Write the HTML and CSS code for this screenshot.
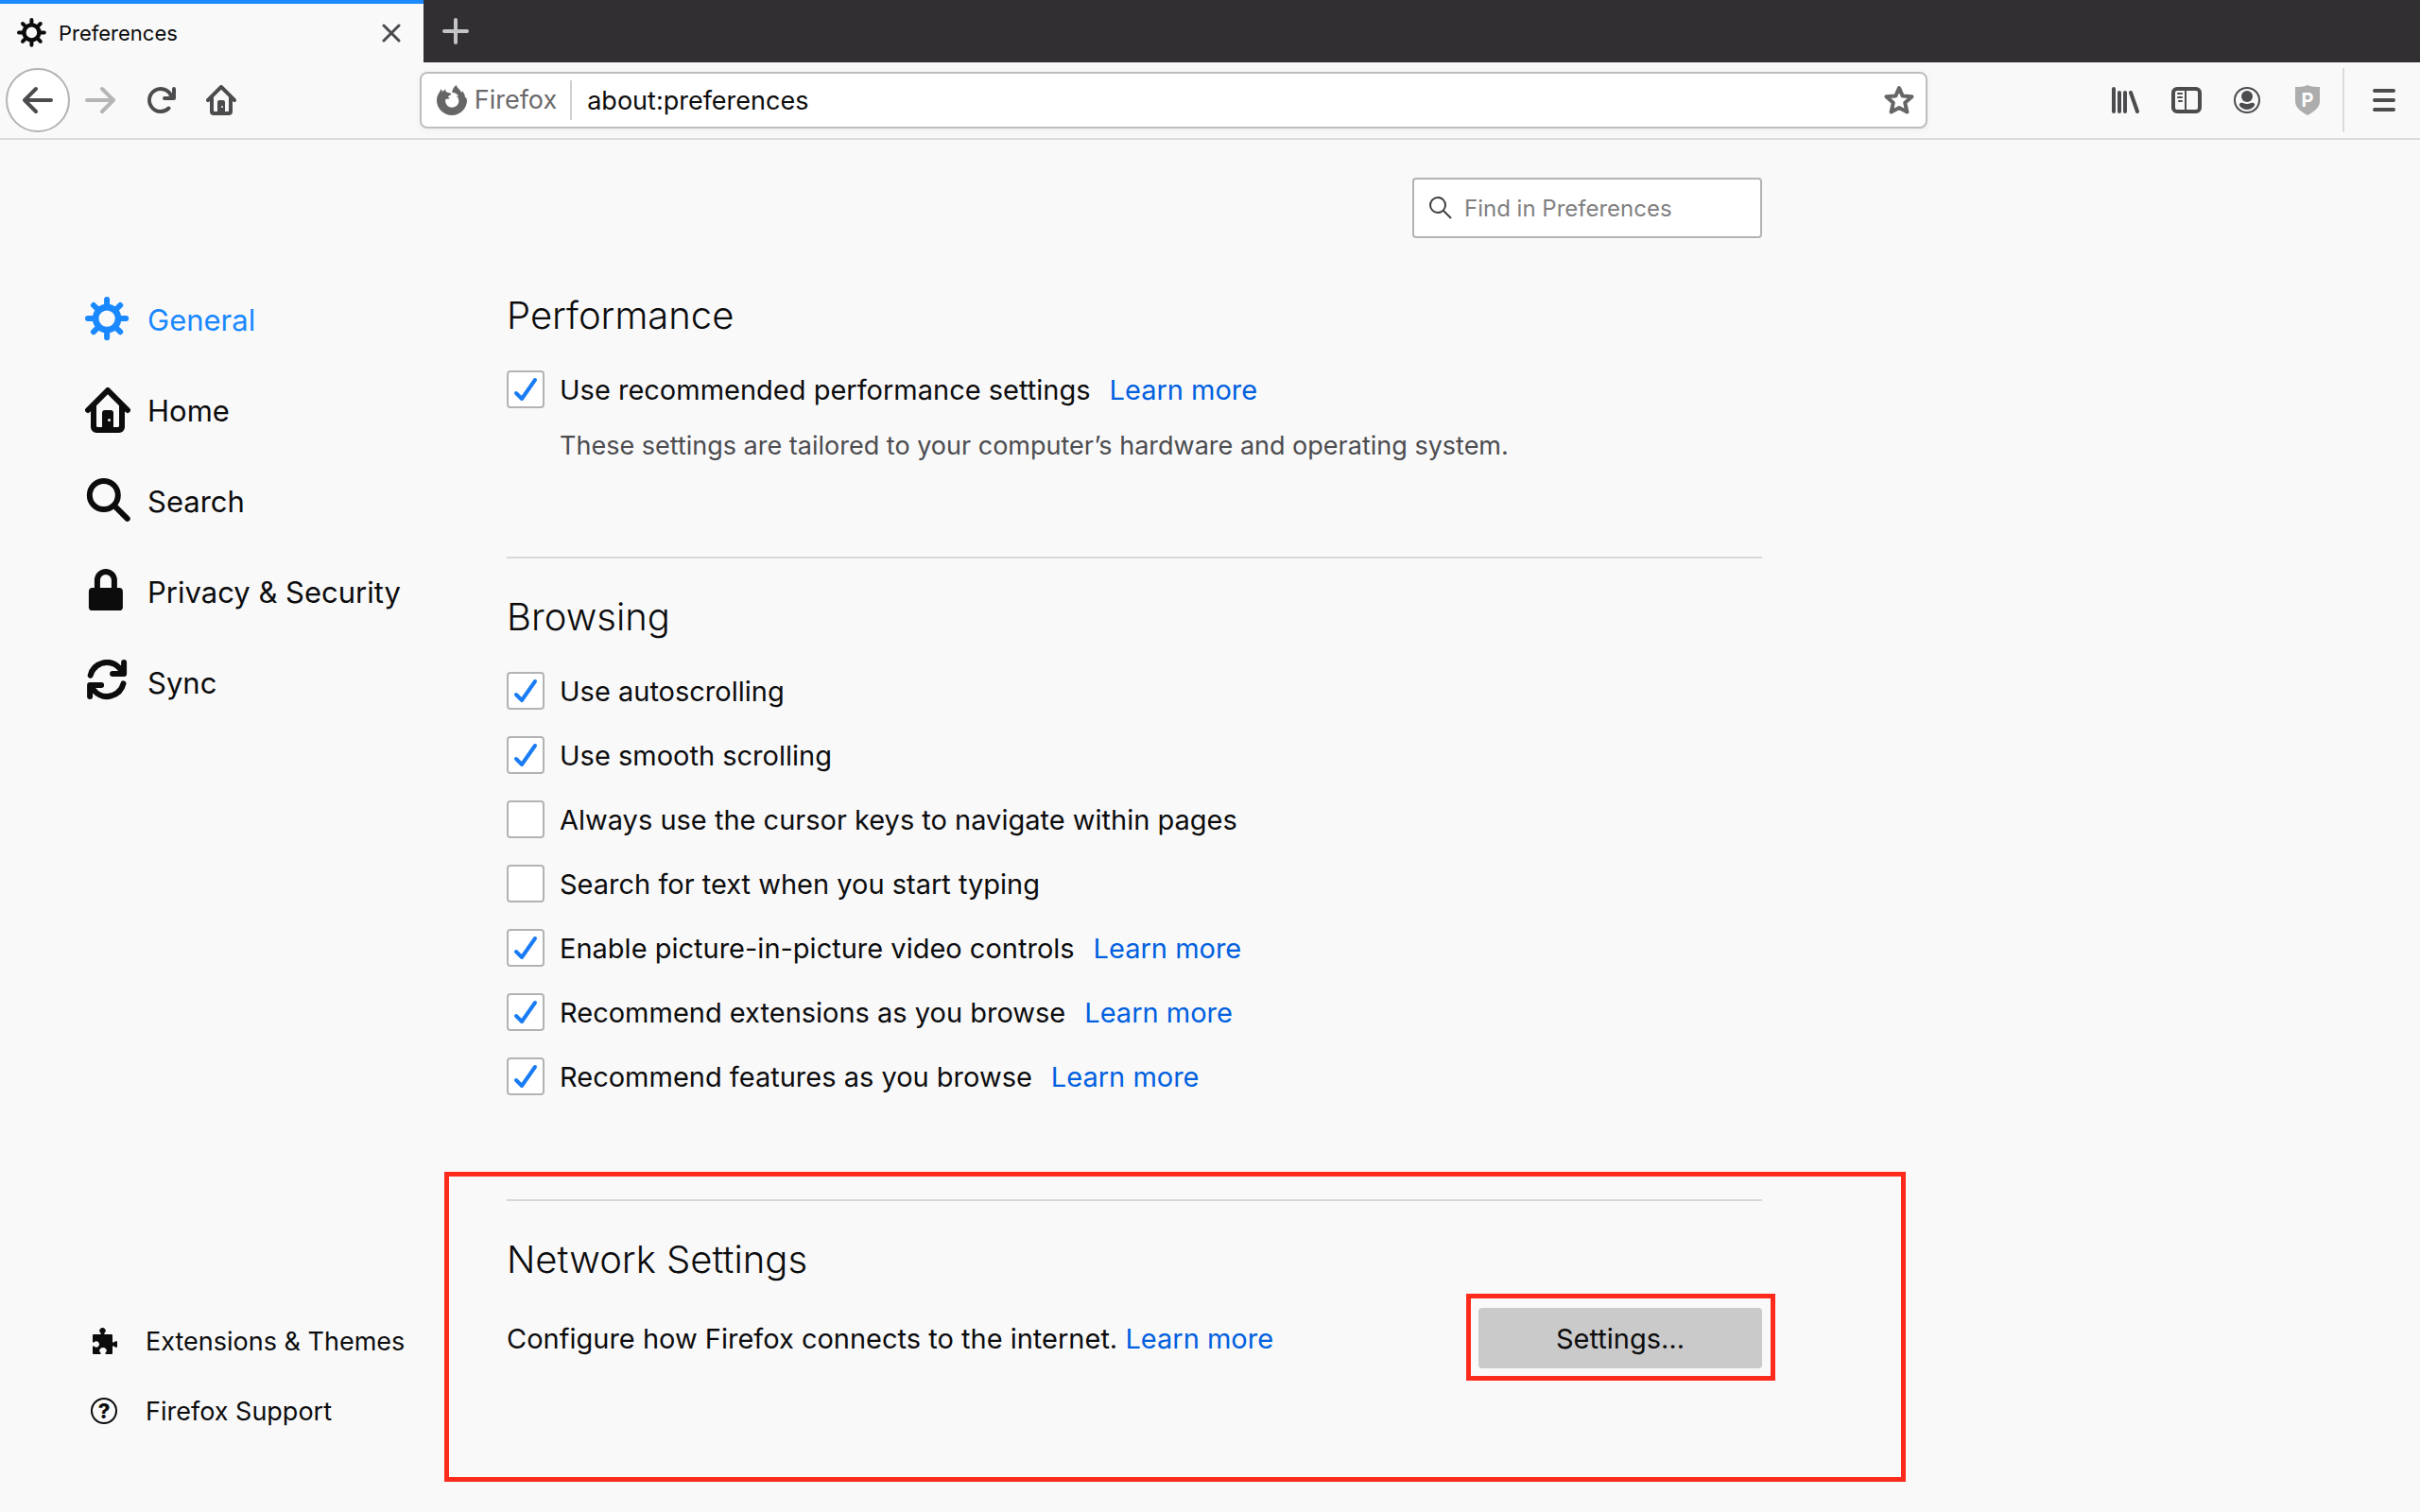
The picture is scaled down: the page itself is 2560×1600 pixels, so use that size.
FILE: index.html
```html
<!DOCTYPE html>
<html lang="en">
<head>
    <meta charset="UTF-8">
    <meta name="viewport" content="width=device-width, initial-scale=1.0">
    <title>Preferences</title>
    <link rel="stylesheet" href="styles.css">
</head>
<body>
    <!-- shared icons -->
    <svg class="defs" width="0" height="0" aria-hidden="true">
        <symbol id="gear" viewBox="0 0 16 16">
            <g fill="none" stroke="currentColor" stroke-width="2" stroke-linecap="round">
                <circle cx="7.7" cy="7.7" r="4" stroke-width="2.2"/>
                <path d="M7.7 1v2M7.7 12.4v2M1 7.7h2M12.4 7.7h2M3 3l1.4 1.4M11 11l1.4 1.4M12.4 3L11 4.4M3 12.4L4.4 11"/>
            </g>
        </symbol>
        <symbol id="home" viewBox="0 0 16 16">
            <path fill="currentColor" fill-rule="evenodd" d="M15.707 7.293l-7-7a1 1 0 0 0-1.414 0l-7 7a1 1 0 0 0 1.414 1.414L2 8.414V14a2 2 0 0 0 2 2h8a2 2 0 0 0 2-2V8.414l.293.293a1 1 0 0 0 1.414-1.414zM8 2.414l4 4V13.500a.5.5 0 0 1-.5.5H10V9a1 1 0 0 0-1-1H7a1 1 0 0 0-1 1v5H4.500a.5.5 0 0 1-.5-.5V6.414zM8.500 11a.5.5 0 1 1 0 1 .5.5 0 0 1 0-1z"/>
        </symbol>
        <symbol id="back" viewBox="0 0 16 16">
            <path fill="currentColor" d="M15 7H3.414l4.293-4.293a1 1 0 0 0-1.414-1.414l-6 6a1 1 0 0 0 0 1.414l6 6a1 1 0 0 0 1.414-1.414L3.414 9H15a1 1 0 0 0 0-2z"/>
        </symbol>
    </svg>

    <div class="tab-bar">
        <div class="tab">
            <svg class="icon"><use href="#gear"/></svg>
            <span class="tab-title">Preferences</span>
            <button class="tab-close" aria-label="Close tab">
                <svg width="20" height="20" viewBox="0 0 20 20"><path d="M2 2l16 16M18 2L2 18" stroke="currentColor" stroke-width="3" stroke-linecap="round"/></svg>
            </button>
        </div>
        <button class="new-tab" aria-label="New tab">
            <svg width="28" height="28" viewBox="0 0 28 28"><path d="M14 2v24M2 14h24" stroke="currentColor" stroke-width="4" stroke-linecap="round"/></svg>
        </button>
    </div>

    <div class="toolbar">
        <button class="back-button" aria-label="Back"><svg class="icon"><use href="#back"/></svg></button>
        <button class="tool forward" aria-label="Forward" disabled><svg class="icon"><use href="#back"/></svg></button>
        <button class="tool" aria-label="Reload">
            <svg class="icon" viewBox="0 0 16 16"><path fill="currentColor" d="M15 1a1 1 0 0 0-1 1v2.418A6.995 6.995 0 1 0 8 15a6.954 6.954 0 0 0 4.950-2.050 1 1 0 0 0-1.414-1.414A5.019 5.019 0 1 1 12.549 6H10a1 1 0 0 0 0 2h5a1 1 0 0 0 1-1V2a1 1 0 0 0-1-1z"/></svg>
        </button>
        <button class="tool" aria-label="Home"><svg class="icon"><use href="#home"/></svg></button>
        <div class="spacer"></div>
        <div class="url-bar">
            <svg class="icon fox" viewBox="0 0 96 96"><path fill="currentColor" d="M10 20l4-8 4 9 10-8c-1 7 1 10 8 11 5 1 9 2 10 4 0 4-8 6-10 9 1 3 3 4 6 4-4 4-11 2-14 4-3 14 7 26 20 26 12 0 22-9 22-21 0-7-3-12-7-15 3-1 5 0 7 2-3-8-10-13-21-13 0-9 4-18 13-24 2 9 12 14 17 24l2-5c6 7 9 14 9 21l3-1 3 9a48 48 0 0 1-96 0c0-10 3-18 10-28z"/></svg>
            <span class="identity">Firefox</span>
            <input class="url" type="text" aria-label="Address" value="about:preferences">
            <button class="star" aria-label="Bookmark this page">
                <svg class="icon" viewBox="0 0 32 32"><path d="M16 3l3.700 8.600 9.800.6-7.300 6.600 2.200 9.700-8.400-4.600-8.400 4.600 2.200-9.700L2.500 12.200l9.800-.6z" fill="none" stroke="currentColor" stroke-width="4" stroke-linejoin="round"/></svg>
            </button>
        </div>
        <div class="spacer"></div>
        <button class="tool" aria-label="Library">
            <svg class="icon" viewBox="0 0 32 32"><path d="M3 4v24M9 8v20M15 8v20M21 8l7 20" stroke="currentColor" stroke-width="4" stroke-linecap="round"/></svg>
        </button>
        <button class="tool" aria-label="Sidebars">
            <svg class="icon" viewBox="0 0 32 32" fill="none" stroke="currentColor"><rect x="2" y="4" width="28" height="24" rx="4" stroke-width="4"/><path d="M15 5v22" stroke-width="2"/><path d="M7 9h4M7 13h4M8 17h3" stroke-width="2" stroke-linecap="round"/></svg>
        </button>
        <button class="tool" aria-label="Account">
            <svg class="icon" viewBox="0 0 32 32"><circle cx="16" cy="16" r="13" fill="none" stroke="currentColor" stroke-width="2"/><circle cx="16" cy="12" r="6" fill="currentColor"/><path fill="currentColor" d="M9 19c3-1 4 1 7 1s4-2 7-1c2 1 1 3 0 4-4 4-10 4-14 0-1-1-2-3 0-4z"/></svg>
        </button>
        <button class="tool shield" aria-label="Protection">
            <svg class="icon" viewBox="0 0 32 32"><path fill="currentColor" d="M16 0c4 2 9 2 13 2v15c0 7-6 11-13 15C9 28 3 24 3 17V2c4 0 9 0 13-2z"/><text x="16" y="23" text-anchor="middle">P</text></svg>
        </button>
        <div class="divider"></div>
        <button class="tool" aria-label="Menu">
            <svg class="icon" viewBox="0 0 32 32"><path d="M6 6h20M6 16h20M6 26h20" stroke="currentColor" stroke-width="4" stroke-linecap="round"/></svg>
        </button>
    </div>

    <div class="page">
        <nav class="sidebar">
            <div class="categories">
                <a href="#general" class="category selected"><svg><use href="#gear"/></svg>General</a>
                <a href="#home-page" class="category"><svg><use href="#home"/></svg>Home</a>
                <a href="#search" class="category">
                    <svg viewBox="0 0 16 16" fill="none" stroke="currentColor" stroke-width="2"><circle cx="6.600" cy="6" r="5"/><path d="M10.300 9.700l4.600 4.600" stroke-linecap="round"/></svg>Search
                </a>
                <a href="#privacy" class="category">
                    <svg viewBox="0 0 16 16"><rect x="1.300" y="6.700" width="12" height="8" rx="1.300" fill="currentColor"/><path d="M4.300 8V4a3 3 0 0 1 6 0v4" fill="none" stroke="currentColor" stroke-width="2"/></svg>Privacy &amp; Security
                </a>
                <a href="#sync" class="category">
                    <svg viewBox="0.300 1 16 16"><path fill="currentColor" d="M14 1a1 1 0 0 0-1 1v1.146A6.948 6.948 0 0 0 1.227 6.307a1 1 0 1 0 1.940.484A4.983 4.983 0 0 1 8 3a4.919 4.919 0 0 1 3.967 2H10a1 1 0 0 0 0 2h4a1 1 0 0 0 1-1V2a1 1 0 0 0-1-1zm.046 7.481a1 1 0 0 0-1.213.728A4.983 4.983 0 0 1 8 13a4.919 4.919 0 0 1-3.967-2H6a1 1 0 0 0 0-2H2a1 1 0 0 0-1 1v4a1 1 0 0 0 2 0v-1.146a6.948 6.948 0 0 0 11.773-3.161 1 1 0 0 0-.727-1.212z"/></svg>Sync
                </a>
            </div>
            <div class="footer-links">
                <a href="#addons" class="footer-link">
                    <svg viewBox="-2 0 28 28"><path fill="currentColor" d="M1 7h7c1 0 1-1 0-2-2-2 0-5 2.500-5s4.500 3 2.500 5c-1 1-1 2 0 2h7c1 0 1 1 1 1v6c0 2 1 2 2 1 2-2 5 0 5 2.500s-3 4.500-5 2.500c-1-1-2-1-2 1v6c0 1-1 1-1 1h-5c-2 0-2-1-1-2 2-2 0-5-3-5s-5 3-3 5c1 1 1 2-1 2H1c-1 0-1-1-1-1v-6c0-2 1-2 2-1 2 2 5 0 5-2.500s-3-4.500-5-2.500c-1 1-2 1-2-1V8s0-1 1-1z"/></svg>Extensions &amp; Themes
                </a>
                <a href="#support" class="footer-link">
                    <svg viewBox="0 0 28 28"><circle cx="14" cy="14" r="13" fill="none" stroke="currentColor" stroke-width="2"/><text x="14" y="22" text-anchor="middle">?</text></svg>Firefox Support
                </a>
            </div>
        </nav>

        <main class="content">
            <div class="search-box">
                <svg width="24" height="24" viewBox="0 0 24 24" fill="none" stroke="currentColor" stroke-width="2"><circle cx="9" cy="9" r="8"/><path d="M15 15l8 8"/></svg>
                <input type="search" placeholder="Find in Preferences" aria-label="Find in Preferences">
            </div>

            <section class="group first">
                <h2>Performance</h2>
                <div class="row">
                    <input type="checkbox" id="recommended" checked>
                    <label for="recommended">Use recommended performance settings</label>
                    <a href="#learn-performance">Learn more</a>
                </div>
                <p class="description">These settings are tailored to your computer’s hardware and operating system.</p>
            </section>

            <section class="group">
                <h2>Browsing</h2>
                <div class="row">
                    <input type="checkbox" id="autoscroll" checked>
                    <label for="autoscroll">Use autoscrolling</label>
                </div>
                <div class="row">
                    <input type="checkbox" id="smooth" checked>
                    <label for="smooth">Use smooth scrolling</label>
                </div>
                <div class="row">
                    <input type="checkbox" id="cursor-keys">
                    <label for="cursor-keys">Always use the cursor keys to navigate within pages</label>
                </div>
                <div class="row">
                    <input type="checkbox" id="find-typing">
                    <label for="find-typing">Search for text when you start typing</label>
                </div>
                <div class="row">
                    <input type="checkbox" id="pip" checked>
                    <label for="pip">Enable picture-in-picture video controls</label>
                    <a href="#learn-pip">Learn more</a>
                </div>
                <div class="row">
                    <input type="checkbox" id="rec-extensions" checked>
                    <label for="rec-extensions">Recommend extensions as you browse</label>
                    <a href="#learn-extensions">Learn more</a>
                </div>
                <div class="row">
                    <input type="checkbox" id="rec-features" checked>
                    <label for="rec-features">Recommend features as you browse</label>
                    <a href="#learn-features">Learn more</a>
                </div>
            </section>

            <section class="group network">
                <h2>Network Settings</h2>
                <div class="network-row">
                    <p>Configure how Firefox connects to the internet. <a href="#learn-network">Learn more</a></p>
                    <div class="settings">
                        <button class="settings-button">Settings…</button>
                        <div class="marker"></div>
                    </div>
                </div>
                <div class="marker"></div>
            </section>
        </main>
    </div>
</body>
</html>
```
FILE: styles.css
```css
* {
    box-sizing: border-box;
}

body {
    margin: 0;
    min-height: 100vh;
    display: flex;
    flex-direction: column;
    background-color: #f9f9fa;
    color: #0c0c0d;
    font-family: Inter, "Liberation Sans", sans-serif;
    font-size: 29px;
}

button {
    display: flex;
    align-items: center;
    justify-content: center;
    padding: 0;
    border: none;
    background: none;
    color: inherit;
    font-family: inherit;
}

a {
    color: #0060df;
    text-decoration: none;
}

h2, p {
    margin: 0;
}

.defs {
    position: absolute;
}

.icon {
    width: 32px;
    height: 32px;
}

/* Tabs */
.tab-bar {
    display: flex;
    height: 66px;
    background-color: #312f31;
}

.tab {
    display: flex;
    align-items: center;
    width: 448px;
    padding: 0 24px 0 18px;
    border-top: 4px solid #1a88ff;
    background-color: #f9f9fa;
    font-size: 22px;
}

.tab-title {
    flex: 1;
    margin-left: 12px;
}

.tab-close {
    color: #4a4a4f;
}

.new-tab {
    width: 68px;
    color: #c4c4c6;
}

/* Toolbar */
.toolbar {
    display: flex;
    align-items: center;
    height: 82px;
    padding: 0 6px;
    border-bottom: 2px solid #dcdcdd;
    color: #4c4c4f;
}

.back-button {
    width: 68px;
    height: 68px;
    border: 2px solid #b3b3b4;
    border-radius: 50%;
    background-color: #fff;
}

.tool {
    width: 64px;
    height: 64px;
}

.forward {
    color: #b5b5b6;
}

.forward .icon {
    transform: rotate(180deg);
}

.spacer {
    flex: 1 1 4px;
}

.url-bar {
    flex: 9;
    display: flex;
    align-items: center;
    height: 60px;
    padding: 0 12px 0 16px;
    border: 2px solid #bebebf;
    border-radius: 8px;
    background-color: #fff;
    box-shadow: 0 2px 8px rgba(0, 0, 0, 0.05);
    font-size: 27px;
}

.fox,
.star {
    color: #666;
}

.identity {
    margin-left: 8px;
    padding-right: 14px;
    border-right: 2px solid #d0d0d1;
    line-height: 42px;
    color: #6a6a6c;
}

.url {
    flex: 1;
    min-width: 0;
    padding: 0 16px;
    border: none;
    outline: none;
    background: none;
    color: #0c0c0d;
    font: inherit;
}

.shield {
    color: #adadae;
}

.shield text {
    fill: #fff;
    font-size: 20px;
    font-weight: bold;
}

.divider {
    width: 2px;
    height: 68px;
    margin: 0 10px 0 5px;
    background-color: #dcdcdd;
}

/* Preferences page */
.page {
    flex: 1;
    display: flex;
}

.sidebar {
    display: flex;
    flex-direction: column;
    justify-content: space-between;
    width: 536px;
    padding: 142px 0 70px 90px;
}

.category,
.footer-link {
    display: flex;
    align-items: center;
    color: #0c0c0d;
}

.category {
    gap: 18px;
    height: 96px;
    font-size: 31px;
}

.category svg {
    width: 48px;
    height: 48px;
}

.selected {
    color: #1a88ff;
}

.footer-link {
    gap: 30px;
    height: 74px;
    padding-left: 6px;
    font-size: 27px;
}

.footer-link svg {
    width: 28px;
    height: 28px;
}

.footer-link text {
    fill: currentColor;
    font-size: 22px;
    font-weight: 800;
}

.content {
    flex: 1;
    max-width: 1328px;
    padding-top: 40px;
}

.search-box {
    display: flex;
    align-items: center;
    gap: 13px;
    width: 370px;
    height: 64px;
    margin-left: auto;
    padding: 0 16px;
    border: 2px solid #b3b3b4;
    border-radius: 4px;
    background-color: #fff;
    color: #3e3e40;
}

.search-box input {
    flex: 1;
    min-width: 0;
    padding: 0;
    border: none;
    outline: none;
    background: none;
    font: inherit;
    font-size: 24px;
}

.search-box input::placeholder {
    color: #808081;
}

.group {
    padding: 34px 0 96px;
    border-top: 2px solid #d8d8d9;
}

.group.first {
    padding-top: 54px;
    border-top: none;
}

.group h2 {
    margin-bottom: 16px;
    font-size: 40px;
    font-weight: 350;
    line-height: 56px;
}

.row {
    display: flex;
    align-items: center;
    height: 68px;
}

.row input {
    appearance: none;
    width: 40px;
    height: 40px;
    margin: 0 16px 0 0;
    border: 2px solid #b3b3b4;
    border-radius: 4px;
    background-color: #fff;
}

.row input:checked {
    background-image: url("data:image/svg+xml,%3Csvg xmlns='http://www.w3.org/2000/svg' viewBox='0 0 40 40'%3E%3Cpath d='M10 24l6 6L30 10' fill='none' stroke='%231a7cf5' stroke-width='4' stroke-linecap='round' stroke-linejoin='round'/%3E%3C/svg%3E");
    background-origin: border-box;
}

.row a {
    margin-left: 20px;
}

.description {
    margin: 5px 0 0 56px;
    color: #4c4c4f;
    font-size: 27px;
    line-height: 42px;
}

.network {
    position: relative;
}

.network-row {
    display: flex;
    align-items: center;
    justify-content: space-between;
    height: 78px;
}

.settings {
    position: relative;
}

.settings-button {
    width: 300px;
    height: 64px;
    border-radius: 4px;
    background-color: #cacacb;
    font-size: 29px;
}

/* Red frames drawn over the page */
.marker {
    position: absolute;
    inset: -15px -14px -13px -13px;
    border: 5px solid #fe2b1d;
    pointer-events: none;
}

.network > .marker {
    inset: -31px -152px auto -66px;
    height: 328px;
}
```
